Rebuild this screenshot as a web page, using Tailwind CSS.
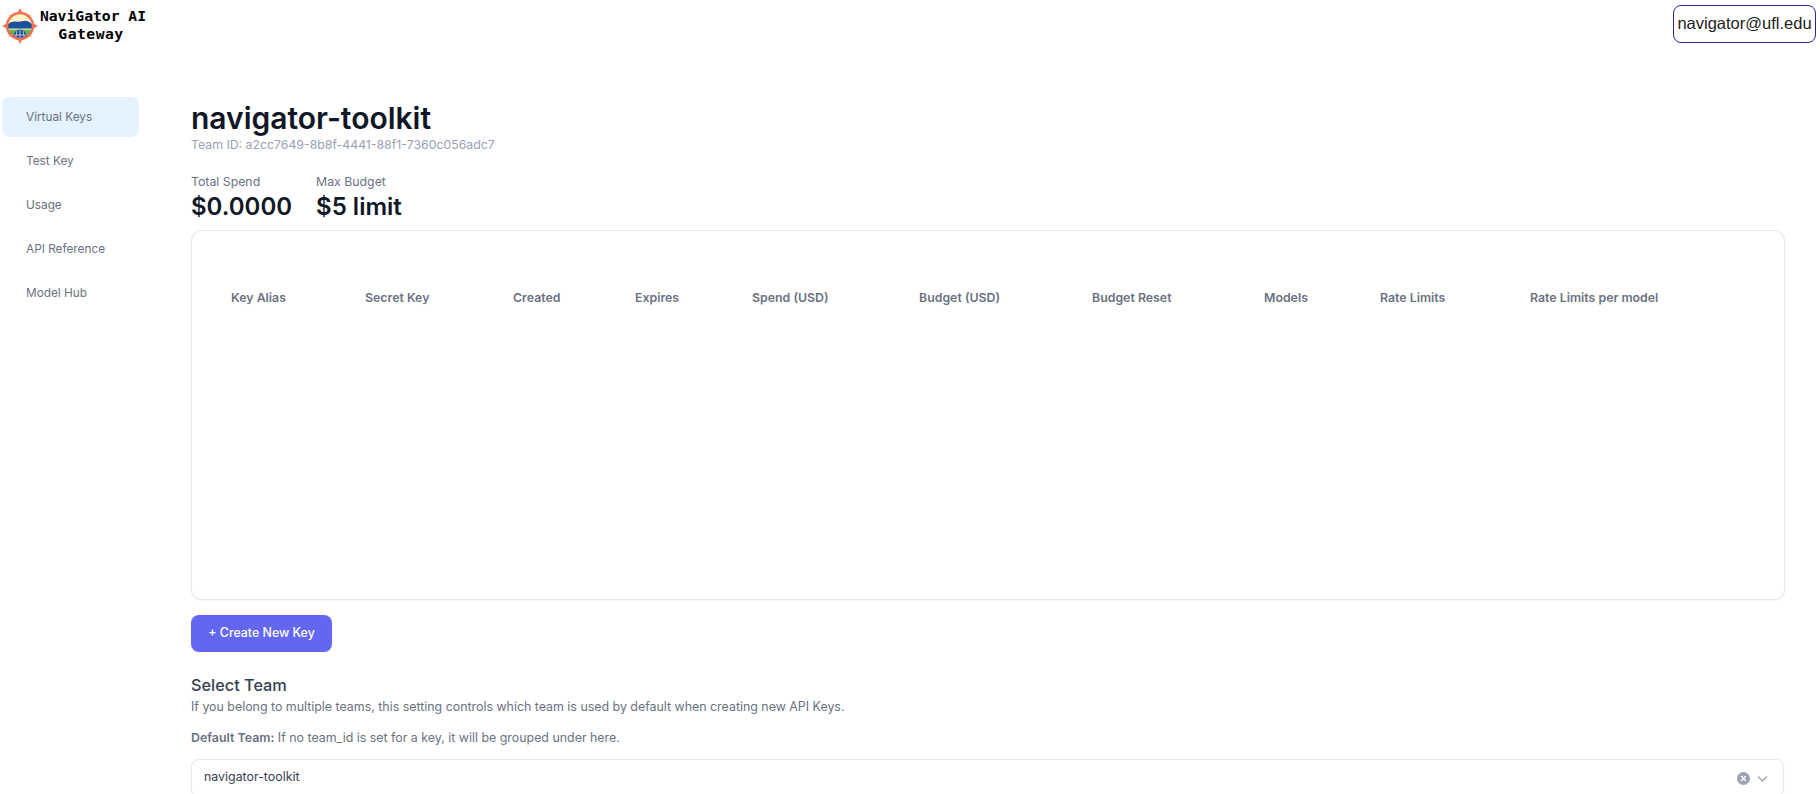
<!DOCTYPE html>
<html lang="en">
<head>
<meta charset="utf-8">
<title>NaviGator AI Gateway</title>
<script src="https://cdn.jsdelivr.net/npm/@tailwindcss/browser@4"></script>
</head>
<body class="bg-white h-[794px] overflow-hidden font-['Inter',sans-serif]">
<header class="h-[49px] flex items-start justify-between pr-1">
  <div class="flex items-start pl-[2px] pt-[7px]">
    <svg class="mt-[1px]" width="36" height="36" viewBox="0 0 36 36">
      <path d="M18 0l2.500 5h-5zM18 36l-2.500-5h5zM0 18l5-2.500v5zM36 18l-5 2.500v-5z" fill="#f4714f"/>
      <path d="M6.500 6.500l5 2-3 3zM29.500 6.500l-2 5-3-3zM6.500 29.500l2-5 3 3zM29.500 29.500l-5-2 3-3z" fill="#f9b49c"/>
      <circle cx="18" cy="18" r="13.500" fill="#fdf5c9"/>
      <path d="M5.500 18a12.500 12.500 0 0 0 25 0z" fill="#6cb04f"/>
      <path d="M5 17c3-3 6-4 9-3.500 4 .8 6-.8 9-.8 3 0 6 2 8 4.300v3.500H5z" fill="#1e4f9c"/>
      <path d="M5 20.700h26v1H5z" fill="#e9f1d0"/>
      <path d="M18 21.500c-4 .5-6.500 3.500-7 8 2 1.500 4.500 2.300 7 2.300s5-.8 7-2.300c-.5-4.500-3-7.500-7-8z" fill="#1e4f9c"/>
      <path d="M18 22v9.500M15 23l-1.500 8M21 23l1.500 8M12 27h12" stroke="#e8eef7" stroke-width="0.700" fill="none"/>
      <circle cx="18" cy="18" r="13" fill="none" stroke="#f4714f" stroke-width="2.400"/>
    </svg>
    <div class="w-[110px] ml-0 mt-0 font-['DejaVu_Sans_Mono',monospace] font-bold text-[14.700px] leading-[18px] text-center text-black">NaviGator AI<br><span class="relative left-[-2px] tracking-[0.500px]">Gateway</span></div>
  </div>
  <button class="mt-[5px] h-[38px] w-[143px] pb-[2px] rounded-lg border border-[#3f1d94] bg-white font-['Liberation_Sans',sans-serif] text-[16.500px] text-[#222]">navigator@ufl.edu</button>
</header>
<div class="flex">
  <nav class="w-[191px] shrink-0 pl-[2px] pt-[48px]">
    <ul class="w-[137px] flex flex-col gap-1 text-[11.800px] text-gray-500">
      <li class="h-10 pl-6 pt-[2px] flex items-center rounded-lg bg-[#e3f2fe]">Virtual Keys</li>
      <li class="h-10 pl-6 pt-[2px] flex items-center">Test Key</li>
      <li class="h-10 pl-6 pt-[2px] flex items-center">Usage</li>
      <li class="h-10 pl-6 pt-[2px] flex items-center">API Reference</li>
      <li class="h-10 pl-6 pt-[2px] flex items-center">Model Hub</li>
    </ul>
  </nav>
  <main class="w-[1594px] pt-[51px]">
    <h1 class="text-3xl leading-9 font-semibold text-gray-900">navigator-toolkit</h1>
    <p class="text-[12.300px] leading-4 text-gray-400 mt-[1px]">Team ID: a2cc7649-8b8f-4441-88f1-7360c056adc7</p>
    <div class="flex gap-6 mt-[21px]">
      <div>
        <p class="text-[12.300px] leading-4 text-gray-500">Total Spend</p>
        <p class="text-2xl leading-8 font-semibold text-gray-900 mt-[1px]">$0.0000</p>
      </div>
      <div>
        <p class="text-[12.300px] leading-4 text-gray-500">Max Budget</p>
        <p class="text-2xl leading-8 font-semibold text-gray-900 mt-[1px]">$5 limit</p>
      </div>
    </div>
    <section class="mt-[7px] h-[370px] rounded-[10px] border border-gray-200 shadow-xs pl-[39px] pt-[59px]">
      <div class="grid grid-cols-[134px_148px_122px_117px_167px_173px_172px_116px_150px_auto] text-[12.350px] leading-4 font-semibold text-gray-500">
        <span>Key Alias</span>
        <span>Secret Key</span>
        <span>Created</span>
        <span>Expires</span>
        <span>Spend (USD)</span>
        <span>Budget (USD)</span>
        <span>Budget Reset</span>
        <span>Models</span>
        <span>Rate Limits</span>
        <span>Rate Limits per model</span>
      </div>
    </section>
    <button class="mt-[15px] h-[37px] w-[141px] rounded-lg bg-[#6366f1] text-[12.400px] font-medium text-white">+ Create New Key</button>
    <h2 class="mt-[21px] text-[16.300px] leading-6 font-medium text-gray-700">Select Team</h2>
    <p class="text-[12.400px] leading-4 text-gray-500 mt-[2px]">If you belong to multiple teams, this setting controls which team is used by default when creating new API Keys.</p>
    <p class="text-[12.400px] leading-4 text-gray-500 mt-[15px]"><b class="font-semibold">Default Team:</b> If no team_id is set for a key, it will be grouped under here.</p>
    <div class="mt-[13px] h-[38px] w-[1593px] rounded-lg border border-gray-200 shadow-xs pl-3 pr-[14px] flex items-center justify-between">
      <span class="text-[12.400px] text-gray-700 mt-[-1px]">navigator-toolkit</span>
      <span class="flex items-center gap-[6px]">
        <svg width="13" height="13" viewBox="0 0 13 13"><circle cx="6.500" cy="6.500" r="6.500" fill="#9ca3af"/><path d="M4.500 4.500l4 4M8.500 4.500l-4 4" stroke="#fff" stroke-width="1.500" stroke-linecap="round"/></svg>
        <svg width="13" height="13" viewBox="0 0 13 13"><path d="M2 4.500l4.500 4.500 4.500-4.500" stroke="#9ca3af" stroke-width="1.300" fill="none"/></svg>
      </span>
    </div>
  </main>
</div>
</body>
</html>
